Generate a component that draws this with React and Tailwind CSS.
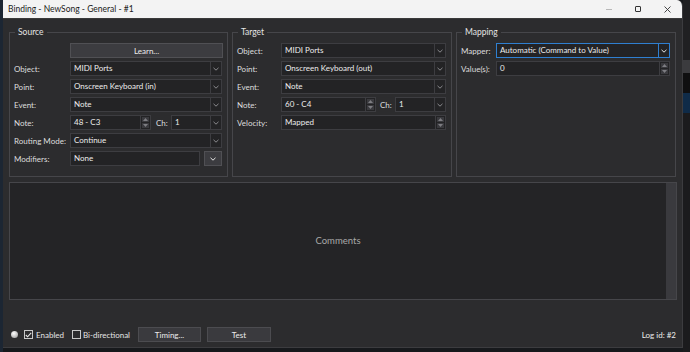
const F = "font-['Lato','Noto_Sans',sans-serif]"

function Chevron({ light }) {
  return (
    <svg width="6" height="4" viewBox="0 0 6 4">
      <path d="M0.5 0.8 L3 3.2 L5.5 0.8" fill="none" stroke={light ? '#e6e6e6' : '#8a8a8e'} strokeWidth="1" />
    </svg>
  )
}

function Combo({ value, focus, className = '' }) {
  return (
    <div
      className={`flex h-[15px] bg-[#232325] border ${focus ? 'border-[#2f7fd0]' : 'border-[#3d3d41]'} ${className}`}
    >
      <span className="flex-1 px-[3px] leading-[13px] truncate text-[#ececec]">{value}</span>
      <div
        className={`w-[11px] flex items-center justify-center border-l ${focus ? 'border-[#2f7fd0]' : 'border-[#3d3d41]'}`}
      >
        <Chevron light={focus} />
      </div>
    </div>
  )
}

function Spin({ value, className = '' }) {
  return (
    <div className={`flex h-[15px] ${className}`}>
      <div className="flex-1 bg-[#232325] border border-[#3d3d41] px-[3px] leading-[13px] text-[#ececec]">{value}</div>
      <div className="w-[10px] flex flex-col gap-[1px] bg-[#232325] border border-l-0 border-[#3d3d41] p-[1px]">
        <div className="flex-1 bg-[#3a3a3e] flex items-center justify-center">
          <svg width="5" height="3" viewBox="0 0 5 3">
            <path d="M0 3 L2.5 0 L5 3 Z" fill="#7d7d82" />
          </svg>
        </div>
        <div className="flex-1 bg-[#3a3a3e] flex items-center justify-center">
          <svg width="5" height="3" viewBox="0 0 5 3">
            <path d="M0 0 L2.5 3 L5 0 Z" fill="#7d7d82" />
          </svg>
        </div>
      </div>
    </div>
  )
}

function Row({ label, lw, children }) {
  return (
    <div className="flex items-center h-[15px]">
      <span className={`${lw} shrink-0 text-[#dedede] whitespace-nowrap`}>{label}</span>
      <div className="flex-1 flex items-center">{children}</div>
    </div>
  )
}

function Group({ title, children }) {
  return (
    <fieldset className="border border-[#46464a] h-[151px] pl-[4px] pr-[5px] min-w-0">
      <legend className="ml-[1px] px-[3px] leading-[12px] text-[8.5px] text-[#e4e4e4]">{title}</legend>
      <div className="flex flex-col gap-[3px] pt-[5px]">{children}</div>
    </fieldset>
  )
}

function Check({ checked }) {
  return (
    <div className="w-[9px] h-[9px] border border-[#c8c8c8] flex items-center justify-center">
      {checked && (
        <svg width="7" height="6" viewBox="0 0 7 6">
          <path d="M0.8 3 L2.6 4.8 L6.2 0.8" fill="none" stroke="#e8e8e8" strokeWidth="1.1" />
        </svg>
      )}
    </div>
  )
}

export default function App() {
  return (
    <div className={`w-[690px] h-[352px] flex bg-[#17191c] overflow-hidden text-[8px] ${F}`}>
      <div className="w-[3px] bg-[#1c2633]" />
      <div className="w-[680px] h-[348px] flex flex-col rounded-tr-[6px] overflow-hidden border-r border-b border-[#3c3c3f]">
        <div className="h-[19px] shrink-0 bg-[#f3f3f3] border-b border-[#3a3a3a] flex items-center pl-[5px] text-[8.5px] text-[#1a1a1a]">
          <span className="flex-1">Binding - NewSong - General - #1</span>
          <div className="flex items-center gap-[23px] pr-[11px]">
            <div className="w-[6px] h-[1px] bg-[#b8b8b8]" />
            <div className="w-[6px] h-[6px] border border-[#333] rounded-[1px]" />
            <svg width="7" height="7" viewBox="0 0 7 7">
              <path d="M0.5 0.5 L6.5 6.5 M6.5 0.5 L0.5 6.5" stroke="#333" strokeWidth="0.9" />
            </svg>
          </div>
        </div>
        <div className="flex-1 bg-[#2c2c2e] pl-[6px] pr-[5px] pt-[7px] flex flex-col">
          <div className="grid grid-cols-[219px_220px_220px] gap-[4px]">
            <Group title="Source">
              <div className="flex h-[15px] ml-[56px] mr-[-1px] bg-[#3c3c40] border border-[#505054] items-center justify-center text-[#ececec]">
                Learn...
              </div>
              <Row label="Object:" lw="w-[56px]"><Combo value="MIDI Ports" className="flex-1" /></Row>
              <Row label="Point:" lw="w-[56px]"><Combo value="Onscreen Keyboard (in)" className="flex-1" /></Row>
              <Row label="Event:" lw="w-[56px]"><Combo value="Note" className="flex-1" /></Row>
              <Row label="Note:" lw="w-[56px]">
                <Spin value="48 - C3" className="w-[81px]" />
                <span className="ml-[5px] w-[15px] text-[#dedede]">Ch:</span>
                <Combo value="1" className="flex-1" />
              </Row>
              <Row label="Routing Mode:" lw="w-[56px]"><Combo value="Continue" className="flex-1" /></Row>
              <Row label="Modifiers:" lw="w-[56px]">
                <div className="flex-1 h-[15px] bg-[#232325] border border-[#3d3d41] px-[3px] leading-[13px] text-[#ececec]">None</div>
                <div className="ml-[4px] w-[18px] h-[15px] bg-[#3c3c40] border border-[#505054] flex items-center justify-center">
                  <Chevron light />
                </div>
              </Row>
            </Group>
            <Group title="Target">
              <Row label="Object:" lw="w-[44px]"><Combo value="MIDI Ports" className="flex-1" /></Row>
              <Row label="Point:" lw="w-[44px]"><Combo value="Onscreen Keyboard (out)" className="flex-1" /></Row>
              <Row label="Event:" lw="w-[44px]"><Combo value="Note" className="flex-1" /></Row>
              <Row label="Note:" lw="w-[44px]">
                <Spin value="60 - C4" className="w-[95px]" />
                <span className="ml-[4px] w-[15px] text-[#dedede]">Ch:</span>
                <Combo value="1" className="flex-1" />
              </Row>
              <Row label="Velocity:" lw="w-[44px]"><Spin value="Mapped" className="flex-1" /></Row>
            </Group>
            <Group title="Mapping">
              <Row label="Mapper:" lw="w-[35px]"><Combo value="Automatic (Command to Value)" focus className="flex-1" /></Row>
              <Row label="Value(s):" lw="w-[35px]"><Spin value="0" className="flex-1" /></Row>
            </Group>
          </div>
          <div className="mt-[5px] h-[118px] flex border border-[#46464a] bg-[#242426]">
            <div className="flex-1 flex items-center justify-center text-[9.5px] text-[#a8a8a8]">Comments</div>
            <div className="w-[10px] bg-[#3a3a3e]" />
          </div>
          <div className="mt-auto mb-[5px] h-[15px] flex items-center">
            <div className="ml-[2px] w-[7px] h-[7px] rounded-full bg-[radial-gradient(circle_at_40%_35%,#ffffff,#bdbdbd_60%,#8a8a8a)]" />
            <div className="ml-[6px]"><Check checked /></div>
            <span className="ml-[3px] text-[#e4e4e4]">Enabled</span>
            <div className="ml-[8px]"><Check /></div>
            <span className="ml-[2px] text-[#e4e4e4]">Bi-directional</span>
            <div className="ml-[8px] w-[63px] h-[15px] bg-[#3a3a3e] border border-[#4c4c50] flex items-center justify-center text-[#ececec]">Timing...</div>
            <div className="ml-[6px] w-[64px] h-[15px] bg-[#3a3a3e] border border-[#4c4c50] flex items-center justify-center text-[#ececec]">Test</div>
            <span className="ml-auto mr-[1px] text-[#ececec]">Log id: #2</span>
          </div>
        </div>
      </div>
      <div className="flex-1 flex flex-col">
        <div className="h-[60px] bg-[#202022]" />
        <div className="h-[13px] bg-[#3b3b3e]" />
        <div className="h-[20px] bg-[#0f0f10]" />
        <div className="h-[20px] bg-[#0f2b48]" />
        <div className="flex-1 bg-[#1b1b1d]" />
      </div>
    </div>
  )
}
